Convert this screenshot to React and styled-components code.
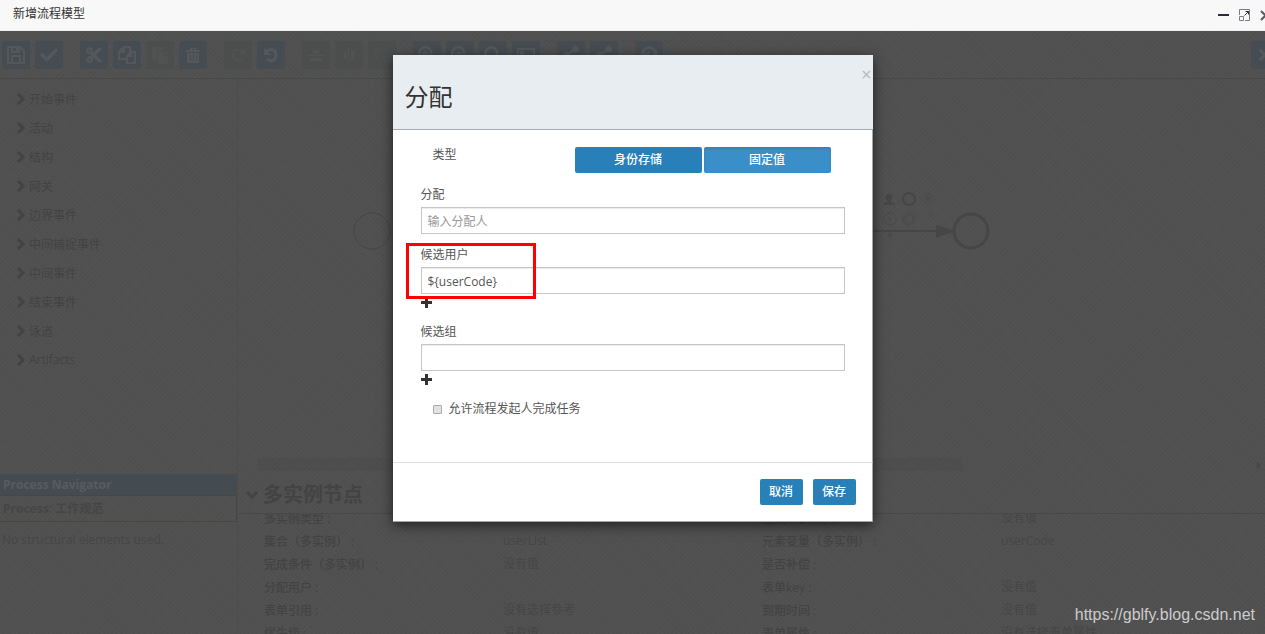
import React from "react";
import styled, { createGlobalStyle } from "styled-components";
import {
  FaCheck,
  FaCut,
  FaPaste,
  FaTimes,
  FaSearchPlus,
  FaSearchMinus,
  FaSearch,
  FaShareAlt,
  FaQuestionCircle,
  FaCaretRight,
} from "react-icons/fa";

const TOOLS = [
  [
    { label: "保存模型", icon: SaveIcon },
    { label: "验证", icon: FaCheck },
  ],
  [
    { label: "剪切", icon: FaCut },
    { label: "复制", icon: CopyIcon },
    { label: "粘贴", icon: FaPaste, off: true },
    { label: "删除", icon: TrashIcon },
  ],
  [
    { label: "重做", icon: RedoIcon, off: true },
    { label: "撤销", icon: UndoIcon },
  ],
  [
    { label: "垂直对齐", icon: AlignVertical, off: true },
    { label: "水平对齐", icon: AlignHorizontal, off: true },
    { label: "相同大小", icon: SameSize, off: true },
  ],
  [
    { label: "放大", icon: FaSearchPlus },
    { label: "缩小", icon: FaSearchMinus },
    { label: "实际大小", icon: FaSearch },
    { label: "适应窗口", icon: FitIcon },
  ],
  [
    { label: "添加拐点", icon: FaShareAlt },
    { label: "删除拐点", icon: FaShareAlt },
  ],
  [{ label: "帮助", icon: FaQuestionCircle }],
];

const PALETTE = [
  "开始事件",
  "活动",
  "结构",
  "网关",
  "边界事件",
  "中间捕捉事件",
  "中间事件",
  "结束事件",
  "泳道",
  "Artifacts",
];

const PROPERTIES = [
  ["多实例类型 :", "", "基数（多实例） :", "没有值"],
  ["集合（多实例） :", "userList", "元素变量（多实例） :", "userCode"],
  ["完成条件（多实例） :", "没有值", "是否补偿 :", ""],
  ["分配用户 :", "", "表单key :", "没有值"],
  ["表单引用 :", "没有选择参考", "到期时间 :", "没有值"],
  ["优先级 :", "没有值", "表单属性 :", "没有选择表单属性"],
];

function SaveIcon() {
  return (
    <svg
      viewBox="0 0 20 20"
      width="20"
      height="20"
      fill="none"
      stroke="currentColor"
      strokeWidth="2"
    >
      <path d="M2 2h12l4 4v12H2zM6 18v-7h8v7M6 2v5h7V2" />
      <path d="M10 3h2v3h-2z" fill="currentColor" stroke="none" />
    </svg>
  );
}

function CopyIcon() {
  return (
    <svg
      viewBox="0 0 20 20"
      width="20"
      height="20"
      fill="none"
      stroke="currentColor"
      strokeWidth="2"
    >
      <path d="M9 14H2V7l5-5h6v5" />
      <path d="M7 2v5H2M10 11l4-4h4v11h-8zM14 7v4h-4" />
    </svg>
  );
}

function TrashIcon() {
  return (
    <svg viewBox="0 0 18 18" width="18" height="18" fill="currentColor">
      <path d="M2 4h4V2h6v2h4v2H2zM8 3v1h2V3z" fillRule="evenodd" />
      <path
        d="M3 7h12v9l-1 1H4l-1-1zM6 9v6h1V9zM9 9v6h1V9zM12 9v6h1V9z"
        fillRule="evenodd"
      />
    </svg>
  );
}

function UndoIcon() {
  return (
    <svg
      viewBox="0 0 18 18"
      width="18"
      height="18"
      fill="none"
      stroke="currentColor"
      strokeWidth="3"
    >
      <path d="M4 6c3-4 10-3 10 3s-6 7-9 4" />
      <path d="M2 2v7h7z" fill="currentColor" stroke="none" />
    </svg>
  );
}

function RedoIcon() {
  return (
    <svg
      viewBox="0 0 18 18"
      width="18"
      height="18"
      fill="none"
      stroke="currentColor"
      strokeWidth="2"
    >
      <path d="M14 6c-3-4-10-3-10 3s6 7 9 4" />
      <path d="M16 2v6h-6z" fill="currentColor" stroke="none" />
    </svg>
  );
}

function FitIcon() {
  return (
    <svg
      viewBox="0 0 20 20"
      width="20"
      height="20"
      fill="none"
      stroke="currentColor"
      strokeWidth="2"
    >
      <path d="M2 4h16v12H2zM5 7l3 3M5 10V7h3" />
    </svg>
  );
}

function AlignVertical() {
  return (
    <svg viewBox="0 0 16 16" width="16" height="16" fill="currentColor">
      <path d="M0 8h16v1H0zM5 3h6v4H5zM2 11h12v3H2z" />
    </svg>
  );
}

function AlignHorizontal() {
  return (
    <svg viewBox="0 0 16 16" width="16" height="16" fill="currentColor">
      <path d="M7 1h1v14H7zM3 5h3v7H3zM10 3h3v10h-3z" />
    </svg>
  );
}

function SameSize() {
  return (
    <svg
      viewBox="0 0 16 16"
      width="16"
      height="16"
      fill="none"
      stroke="currentColor"
    >
      <path d="M1 1h4v4H1zM10 10h5v5h-5zM8 2h4M3 9v4" />
    </svg>
  );
}

const Chevron = ({ down }) => (
  <svg
    viewBox="0 0 12 12"
    width="12"
    height="12"
    fill="none"
    stroke="currentColor"
    strokeWidth="3"
  >
    <path d={down ? "M1 4l5 5 5-5" : "M4 1l5 5-5 5"} />
  </svg>
);

const Plus = () => (
  <svg width="11" height="11" fill="currentColor">
    <path d="M4 0h3v4h4v3H7v4H4V7H0V4h4z" />
  </svg>
);

const Diagram = () => (
  <DiagramSvg aria-hidden="true">
    <circle cx="134" cy="152" r="18" strokeWidth="1" />
    <path d="M580 152H702" strokeWidth="2" />
    <path d="M698 146l19 6-19 7z" fill="currentColor" stroke="none" />
    <circle cx="733" cy="152" r="17" strokeWidth="3" />
    {/* quick menu of the selected task */}
    <g strokeWidth="1">
      <path
        d="M651 115c-3 0-4 2-3 5l1 2c0 2-4 1-4 4h12c0-3-4-2-4-4l1-2c1-3 0-5-3-5z"
        fill="currentColor"
        stroke="none"
      />
      <circle cx="671" cy="120" r="6" strokeWidth="2" />
      <g opacity="0.6">
        <path d="M690 114l6 6-6 6-6-6z" />
        <circle cx="690" cy="120" r="2" fill="currentColor" />
        <circle cx="652" cy="140" r="6" />
        <path d="M650 138l4 4M654 138l-4 4" />
        <circle cx="671" cy="140" r="6" />
        <circle cx="671" cy="140" r="4" />
        <path d="M695 134c-4 1-3 3-2 5" />
        <path d="M652 153l3 3-3 3-3-3z" fill="currentColor" stroke="none" />
      </g>
    </g>
  </DiagramSvg>
);

const TextField = ({ id, label, addLabel, ...rest }) => (
  <Field>
    <FieldLabel htmlFor={id}>{label}</FieldLabel>
    <Input id={id} type="text" {...rest} />
    {addLabel && (
      <AddButton type="button" aria-label={addLabel}>
        <Plus />
      </AddButton>
    )}
  </Field>
);

const AssignmentDialog = () => {
  const [type, setType] = React.useState("static");

  return (
    <Dialog role="dialog" aria-labelledby="assignment-title">
      <DialogHeader>
        <DialogTitle id="assignment-title">分配</DialogTitle>
        <CloseButton type="button" aria-label="关闭">
          ×
        </CloseButton>
      </DialogHeader>
      <DialogBody>
        <TypeRow role="group" aria-labelledby="type-label">
          <TypeLabel id="type-label">类型</TypeLabel>
          <TypeButtons>
            <TypeButton
              type="button"
              $active={type === "idm"}
              onClick={() => setType("idm")}
            >
              身份存储
            </TypeButton>
            <TypeButton
              type="button"
              $active={type === "static"}
              onClick={() => setType("static")}
            >
              固定值
            </TypeButton>
          </TypeButtons>
        </TypeRow>
        <TextField id="assignee" label="分配" placeholder="输入分配人" />
        <Marked>
          <TextField
            id="candidate-user"
            label="候选用户"
            defaultValue="${userCode}"
            addLabel="添加候选用户"
          />
          <Mark />
        </Marked>
        <TextField id="candidate-group" label="候选组" addLabel="添加候选组" />
        <CheckRow>
          <Checkbox type="checkbox" />
          允许流程发起人完成任务
        </CheckRow>
      </DialogBody>
      <DialogFooter>
        <Button type="button">取消</Button>
        <Button type="button">保存</Button>
      </DialogFooter>
    </Dialog>
  );
};

const App = () => (
  <Page>
    <GlobalStyle />
    <TitleBar>
      <WindowTitle>新增流程模型</WindowTitle>
      <WindowButtons>
        <WindowButton type="button" aria-label="最小化">
          <svg width="12" height="12" stroke="#2d2c3b" strokeWidth="2">
            <path d="M0 6h11" />
          </svg>
        </WindowButton>
        <WindowButton type="button" aria-label="最大化">
          <svg width="12" height="12" fill="none" stroke="#7d7c86">
            <path d="M.5 6V.5h10v11H6M.5 7.500h4v4h-4z" />
            <path d="M5.500 6.500l4-4M6.500 2.500h3v3" stroke="#2d2c3b" />
          </svg>
        </WindowButton>
        <WindowButton type="button" aria-label="关闭窗口">
          <svg width="12" height="12" stroke="#5a5965" strokeWidth="2">
            <path d="M1 2l9 9M10 2l-9 9" />
          </svg>
        </WindowButton>
      </WindowButtons>
    </TitleBar>

    <Editor>
      <Toolbar>
        {TOOLS.map((group, index) => (
          <ToolGroup key={`group-${index}`}>
            {group.map(({ label, icon: Icon, off }) => (
              <ToolButton
                type="button"
                key={label}
                aria-label={label}
                $off={off}
              >
                <Icon />
              </ToolButton>
            ))}
          </ToolGroup>
        ))}
        <ExitButton type="button" aria-label="退出编辑器">
          <FaTimes />
        </ExitButton>
      </Toolbar>

      <Workspace>
        <Sidebar>
          <Palette>
            {PALETTE.map((name) => (
              <PaletteItem key={name}>
                <Chevron />
                {name}
              </PaletteItem>
            ))}
          </Palette>
          <Navigator>
            <NavigatorTitle>Process Navigator</NavigatorTitle>
            <NavigatorProcess>Process: 工作规范</NavigatorProcess>
            <NavigatorEmpty>No structural elements used.</NavigatorEmpty>
          </Navigator>
        </Sidebar>

        <Main>
          <Canvas>
            <Diagram />
          </Canvas>
          <ScrollTrack>
            <ScrollThumb />
            <FaCaretRight />
          </ScrollTrack>
          <PropertiesTitle>
            <Chevron down />
            多实例节点
          </PropertiesTitle>
          <Properties>
            {PROPERTIES.map((row) => (
              <PropertyRow key={row[0]}>
                <dt>{row[0]}</dt>
                <dd>{row[1]}</dd>
                <dt>{row[2]}</dt>
                <dd>{row[3]}</dd>
              </PropertyRow>
            ))}
          </Properties>
        </Main>
      </Workspace>

      <Overlay>
        <AssignmentDialog />
      </Overlay>
      <Watermark>https://gblfy.blog.csdn.net</Watermark>
    </Editor>
  </Page>
);

const GlobalStyle = createGlobalStyle`
  * {
    box-sizing: border-box;
  }

  body {
    margin: 0;
    font-family: "Open Sans", "Noto Sans CJK SC", sans-serif;
    font-size: 12px;
    color: #333;
  }

  button,
  input {
    font: inherit;
  }
`;

const Page = styled.div`
  height: 100vh;
  display: flex;
  flex-direction: column;
  overflow: hidden;
`;

const TitleBar = styled.header`
  display: flex;
  justify-content: space-between;
  height: 31px;
  flex: none;
  padding-left: 13px;
  background: #f8f8f8;
  border-bottom: 1px solid #eee;
`;

const WindowTitle = styled.span`
  line-height: 28px;
`;

const WindowButtons = styled.div`
  display: flex;
  align-items: center;
  gap: 9px;
  margin-right: -7px;
`;

const WindowButton = styled.button`
  display: flex;
  padding: 0;
  border: 0;
  background: none;
`;

const Editor = styled.div`
  position: relative;
  flex: 1;
  min-height: 0;
  display: flex;
  flex-direction: column;
  color: #464646;
  background-color: #505050;
  background-image: repeating-linear-gradient(
      45deg,
      rgba(255, 255, 255, 0.015) 0 1px,
      transparent 1px 3px
    ),
    repeating-linear-gradient(
      -45deg,
      rgba(0, 0, 0, 0.02) 0 1px,
      transparent 1px 4px
    );
`;

const Toolbar = styled.div`
  display: flex;
  flex: none;
  height: 48px;
  padding: 10px 0 0 2px;
  border-bottom: 1px solid #484848;
`;

const ToolGroup = styled.div`
  display: flex;
  gap: 5px;
  margin-right: 17px;
`;

const ToolButton = styled.button`
  display: flex;
  align-items: center;
  justify-content: center;
  width: 28px;
  height: 28px;
  flex: none;
  padding: 0;
  border: 0;
  border-radius: 3px;
  font-size: 18px;
  color: ${(props) => (props.$off ? "#505352" : "#54585b")};
  background: ${(props) => (props.$off ? "#4b4e4d" : "#464d52")};
`;

const ExitButton = styled(ToolButton)`
  margin-left: auto;
  margin-right: -14px;
`;

const Workspace = styled.div`
  flex: 1;
  min-height: 0;
  display: flex;
`;

const Sidebar = styled.aside`
  width: 238px;
  flex: none;
  display: flex;
  flex-direction: column;
  border-right: 1px solid #4d4d4d;
`;

const Palette = styled.ul`
  flex: 1;
  margin: 0;
  padding: 5px 0 0 14px;
  list-style: none;
`;

const PaletteItem = styled.li`
  display: flex;
  align-items: center;
  gap: 3px;
  height: 29px;
  color: #434343;
`;

const Navigator = styled.section`
  height: 160px;
  flex: none;
`;

const NavigatorTitle = styled.h2`
  margin: 0;
  padding-left: 3px;
  font-size: 12px;
  line-height: 21px;
  color: #585b5d;
  background: #454c51;
`;

const NavigatorProcess = styled.div`
  padding-left: 3px;
  border: 1px solid #434a40;
  border-left: 0;
  font-weight: bold;
  line-height: 25px;
`;

const NavigatorEmpty = styled.p`
  margin: 8px 0 0 2px;
  line-height: 20px;
  white-space: nowrap;
`;

const Main = styled.main`
  flex: 1;
  min-width: 0;
  display: flex;
  flex-direction: column;
`;

const Canvas = styled.div`
  flex: 1;
  min-height: 0;
`;

const DiagramSvg = styled.svg`
  display: block;
  width: 100%;
  height: 100%;
  color: #464646;
  fill: none;
  stroke: currentColor;
`;

const ScrollTrack = styled.div`
  display: flex;
  align-items: center;
  justify-content: space-between;
  height: 13px;
  flex: none;
  padding-left: 19px;
`;

const ScrollThumb = styled.div`
  width: 70%;
  height: 100%;
  background: rgba(0, 0, 0, 0.03);
`;

const PropertiesTitle = styled.h3`
  display: flex;
  align-items: center;
  gap: 5px;
  height: 43px;
  flex: none;
  margin: 0;
  padding: 3px 0 0 8px;
  border-bottom: 1px solid #484848;
  font-size: 20px;
  color: #434343;
`;

const Properties = styled.dl`
  height: 120px;
  flex: none;
  margin: 0;
  padding: 0 5px 0 26px;
  overflow: hidden;
`;

const PropertyRow = styled.div`
  display: grid;
  grid-template-columns: 12fr 13fr 12fr 13fr;
  height: 23px;
  line-height: 23px;

  &:first-child {
    margin-top: -7px;
  }

  dt {
    font-weight: 500;
    color: #434343;
  }

  dd {
    margin: 0;
    line-height: 21px;
  }
`;

const Overlay = styled.div`
  position: absolute;
  inset: 0;
  display: flex;
  align-items: flex-start;
  justify-content: center;
  padding-top: 24px;
`;

const Dialog = styled.section`
  width: 480px;
  border-bottom: 1px solid #a5a5a5;
  background: #fff;
  box-shadow: 0 3px 12px rgba(0, 0, 0, 0.6);
  color: #333;
`;

const DialogHeader = styled.header`
  display: flex;
  justify-content: space-between;
  height: 75px;
  padding-left: 12px;
  background: #e8edf1;
  border-bottom: 1px solid #a3abb5;
`;

const DialogTitle = styled.h1`
  margin: 0;
  font-size: 24px;
  font-weight: normal;
  line-height: 84px;
`;

const CloseButton = styled.button`
  align-self: flex-start;
  padding: 9px 1px;
  border: 0;
  background: none;
  font-size: 18px;
  line-height: 20px;
  color: #b5b9bc;
`;

const DialogBody = styled.div`
  padding: 17px 27px 44px 28px;
  border-right: 1px solid #a5a5a5;
  color: #555;
`;

const TypeRow = styled.div`
  display: flex;
  justify-content: space-between;
  margin-bottom: 13px;
  padding: 0 14px 0 12px;
`;

const TypeLabel = styled.span`
  line-height: 16px;
`;

const TypeButtons = styled.div`
  display: flex;
  gap: 2px;
`;

const Button = styled.button`
  min-width: 43px;
  height: 26px;
  padding: 0;
  border: 0;
  border-radius: 2px;
  font-weight: 500;
  line-height: 26px;
  color: #fff;
  background: #2980b9;
`;

const TypeButton = styled(Button)`
  width: 127px;
  background: ${(props) => (props.$active ? "#3a8fc9" : "#2980b9")};
  box-shadow: ${(props) =>
    props.$active ? "inset 0 2px 3px rgba(0, 0, 0, 0.1)" : "none"};
`;

const Field = styled.div`
  display: flex;
  flex-direction: column;
  margin-bottom: 12px;
`;

const FieldLabel = styled.label`
  margin-bottom: 4px;
  line-height: 17px;
`;

const Input = styled.input`
  width: 100%;
  height: 27px;
  padding: 1px 6px 0;
  border: 1px solid #c6c6c6;
  box-shadow: inset 0 1px 1px rgba(0, 0, 0, 0.08);
  color: #555;
  outline: 0;

  &::placeholder {
    color: #999;
  }
`;

const AddButton = styled.button`
  align-self: flex-start;
  display: flex;
  align-items: center;
  height: 17px;
  padding: 0;
  border: 0;
  background: none;
  color: #333;
`;

const Marked = styled.div`
  position: relative;
`;

// sits over the label and the start of the input
const Mark = styled.div`
  position: absolute;
  top: -3px;
  left: -15px;
  width: 130px;
  height: 56px;
  border: 3px solid #fe0000;
  pointer-events: none;
`;

const CheckRow = styled.label`
  display: flex;
  align-items: center;
  gap: 7px;
  padding-left: 12px;
  line-height: 18px;
`;

const Checkbox = styled.input`
  appearance: none;
  width: 9px;
  height: 9px;
  margin: 0;
  border: 1px solid #aaa;
  border-radius: 1px;
  background: #e2e2e2;

  &:checked {
    background: #2980b9;
  }
`;

const DialogFooter = styled.footer`
  display: flex;
  justify-content: flex-end;
  gap: 10px;
  padding: 16px;
  border-top: 1px solid #e0e0e0;
  border-right: 1px solid #a5a5a5;
`;

const Watermark = styled.div`
  position: absolute;
  right: 10px;
  bottom: 8px;
  font-family: "Liberation Sans", sans-serif;
  font-size: 16px;
  line-height: 22px;
  color: #ccc;
`;

export default App;
